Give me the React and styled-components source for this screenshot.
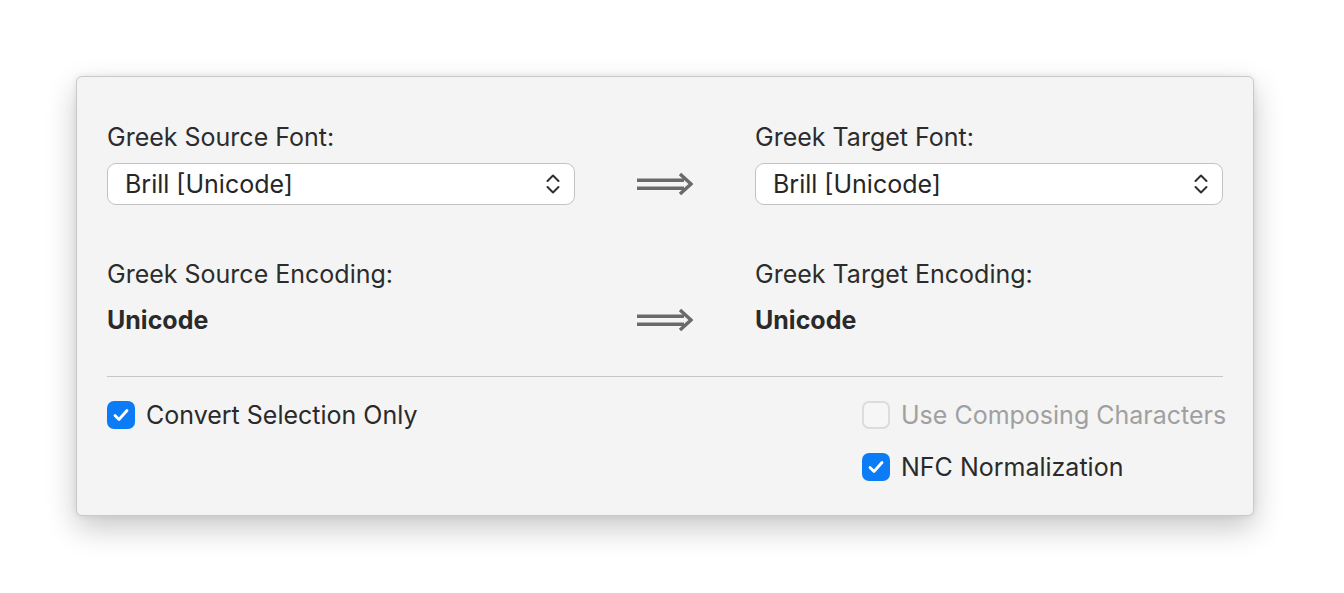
import styled, { createGlobalStyle } from "styled-components";

const GlobalStyle = createGlobalStyle`
  html, body {
    margin: 0;
    padding: 0;
    background: #ffffff;
  }
  body {
    font-family: Inter, "Liberation Sans", Arial, sans-serif;
    color: #2a2a2a;
  }
`;

const Page = styled.div`
  width: 1344px;
  height: 593px;
  padding: 76px 0 0 76px;
  box-sizing: border-box;
`;

const Panel = styled.div`
  width: 1178px;
  box-sizing: border-box;
  background: #f4f4f4;
  border: 1px solid #c9c9c9;
  border-radius: 6px;
  box-shadow: 0 12px 30px rgba(0, 0, 0, 0.22), 0 0 6px rgba(0, 0, 0, 0.08);
  padding: 45px 30px 34px 30px;
`;

const Grid = styled.div`
  display: grid;
  grid-template-columns: 468px 180px 468px;
  align-items: center;
`;

const Label = styled.div`
  font-size: 25px;
  line-height: 30px;
  color: #2c2c2c;
  margin-top: ${(p) => p.$top || 0}px;
`;

const Value = styled.div`
  font-size: 25px;
  line-height: 30px;
  font-weight: 700;
  color: #2a2a2a;
  margin-top: 16px;
`;

const Select = styled.div`
  height: 42px;
  box-sizing: border-box;
  margin-top: 11px;
  background: #ffffff;
  border: 1px solid #c2c2c2;
  border-radius: 9px;
  display: flex;
  align-items: center;
  justify-content: space-between;
  padding: 0 13px 0 17px;
  font-size: 25px;
  color: #262626;
`;

const ArrowCell = styled.div`
  display: flex;
  justify-content: center;
  align-items: center;
  margin-top: ${(p) => p.$top || 0}px;
`;

const Divider = styled.div`
  height: 1px;
  background: #c6c6c6;
  margin: 41px 0 24px;
`;

const Bottom = styled.div`
  display: flex;
  justify-content: space-between;
`;

const CheckColumn = styled.div`
  display: flex;
  flex-direction: column;
  gap: 24px;
  width: ${(p) => (p.$width ? `${p.$width}px` : "auto")};
`;

const CheckRow = styled.label`
  display: flex;
  align-items: center;
  gap: 11px;
  height: 28px;
  font-size: 25px;
  white-space: nowrap;
  color: ${(p) => (p.$disabled ? "#a0a0a0" : "#2a2a2a")};
`;

const Box = styled.span`
  flex: none;
  width: 28px;
  height: 28px;
  box-sizing: border-box;
  border-radius: 7px;
  display: flex;
  align-items: center;
  justify-content: center;
  background: ${(p) => (p.$checked ? "#0b7bf6" : "#f6f6f6")};
  border: ${(p) => (p.$checked ? "none" : "2px solid #dcdcdc")};
`;

const Arrow = () => (
  <svg width="56" height="24" viewBox="0 0 56 24">
    <rect x="0" y="6.5" width="47" height="3.5" fill="#6a6a6a" />
    <rect x="0" y="14.5" width="47" height="3.5" fill="#6a6a6a" />
    <path d="M43 2 L54 12 L43 22" fill="none" stroke="#6a6a6a" strokeWidth="3.5" strokeLinejoin="miter" />
  </svg>
);

const Chevrons = () => (
  <svg width="16" height="22" viewBox="0 0 16 22">
    <path d="M2.5 8 L8 2.5 L13.5 8" fill="none" stroke="#2f2f2f" strokeWidth="2" strokeLinecap="round" strokeLinejoin="round" />
    <path d="M2.5 14 L8 19.5 L13.5 14" fill="none" stroke="#2f2f2f" strokeWidth="2" strokeLinecap="round" strokeLinejoin="round" />
  </svg>
);

const Tick = () => (
  <svg width="18" height="16" viewBox="0 0 18 16">
    <path d="M3 8.5 L7 12.5 L15 3.5" fill="none" stroke="#ffffff" strokeWidth="2.8" strokeLinecap="round" strokeLinejoin="round" />
  </svg>
);

const Check = ({ checked, disabled, children }) => (
  <CheckRow $disabled={disabled}>
    <Box $checked={checked}>{checked && <Tick />}</Box>
    {children}
  </CheckRow>
);

const App = () => {
  return (
    <>
      <GlobalStyle />
      <Page>
        <Panel>
          <Grid>
            <Label>Greek Source Font:</Label>
            <div />
            <Label>Greek Target Font:</Label>

            <Select>
              Brill [Unicode]
              <Chevrons />
            </Select>
            <ArrowCell $top={11}>
              <Arrow />
            </ArrowCell>
            <Select>
              Brill [Unicode]
              <Chevrons />
            </Select>

            <Label $top={54}>Greek Source Encoding:</Label>
            <div />
            <Label $top={54}>Greek Target Encoding:</Label>

            <Value>Unicode</Value>
            <ArrowCell $top={16}>
              <Arrow />
            </ArrowCell>
            <Value>Unicode</Value>
          </Grid>

          <Divider />

          <Bottom>
            <CheckColumn>
              <Check checked>Convert Selection Only</Check>
            </CheckColumn>
            <CheckColumn $width={361}>
              <Check disabled>Use Composing Characters</Check>
              <Check checked>NFC Normalization</Check>
            </CheckColumn>
          </Bottom>
        </Panel>
      </Page>
    </>
  );
};

export default App;
